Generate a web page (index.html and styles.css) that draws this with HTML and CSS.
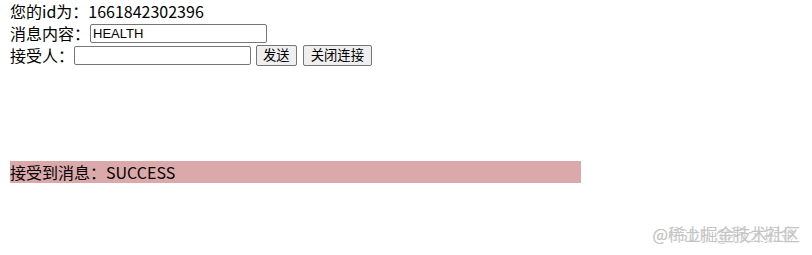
FILE: index.html
```html
<!DOCTYPE html>
<html lang="en">
<head>
    <meta charset="UTF-8">
    <title>WebSocket</title>
    <link rel="stylesheet" href="styles.css">
</head>
<body>
    <div class="page">
        <div class="row">您的id为：1661842302396</div>
        <div class="row">消息内容：<input type="text" class="field" value="HEALTH"></div>
        <div class="row">接受人：<input type="text" class="field"> <button class="btn">发送</button> <button class="btn">关闭连接</button></div>

        <div class="message">接受到消息：SUCCESS</div>
    </div>
    <div class="watermark">
        <span class="wm-back">@CSDN @稀土掘金</span>
        <span class="wm-front">@稀土掘金技术社区</span>
    </div>
</body>
</html>
```

FILE: styles.css
```css
body {
    margin: 0;
    font-family: "Noto Sans CJK SC", "Open Sans", sans-serif;
    font-size: 16px;
    color: #000;
    background: #fff;
}

.page {
    padding: 0 0 0 10px;
}

.row {
    height: 22px;
    line-height: 22px;
    display: flex;
    align-items: center;
}

.field {
    width: 171px;
    height: 15px;
    padding: 1px 2px;
    border: 1px solid #767676;
    border-radius: 2px;
    font-family: Arial, "Liberation Sans", sans-serif;
    font-size: 13px;
    margin: 0;
}

.btn {
    font-family: "Noto Sans CJK SC", sans-serif;
    font-size: 13.33px;
    height: 21px;
    padding: 0 6px;
    margin-left: 5px;
    border: 1px solid #767676;
    border-radius: 2px;
    background: #efefef;
    line-height: 18px;
}

.btn + .btn {
    margin-left: 6px;
    padding: 0 7px;
}

.message {
    margin-top: 95px;
    width: 571px;
    height: 22px;
    line-height: 22px;
    background: #dba9a9;
}

.watermark {
    position: absolute;
    right: 12px;
    top: 222px;
    font-size: 16.5px;
    color: #bbb;
}

.wm-back {
    position: absolute;
    left: 0;
    top: 0;
    white-space: nowrap;
    color: #ccc;
}

.wm-front {
    position: relative;
    white-space: nowrap;
    color: #c4c4c4;
    text-shadow: 1px 1px 0 #fff;
}
```
